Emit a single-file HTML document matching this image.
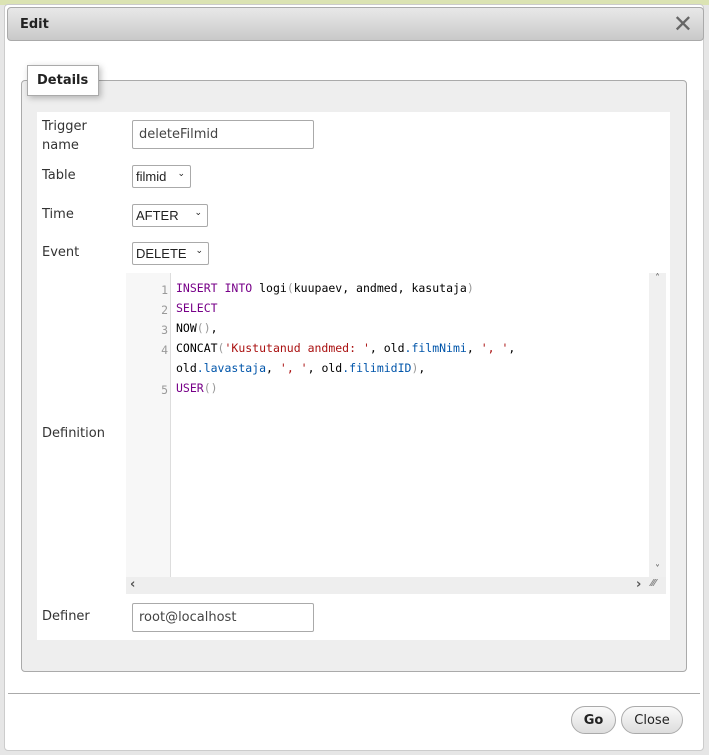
<!DOCTYPE html>
<html><head><style>
*{box-sizing:border-box}
body{margin:0;width:709px;height:755px;background:#e6e6e6;position:relative;overflow:hidden;font-family:"DejaVu Sans","Liberation Sans",sans-serif;font-size:13px;color:#333}
.abs{position:absolute}
.dlg{left:4px;top:4px;width:700px;height:747px;background:#fff;border:1px solid #ccc;border-radius:4px}
.title{left:7px;top:7px;width:697px;height:34px;border:1px solid #aaa;border-radius:4px;background:linear-gradient(#e8e8e8,#c9c9c9);font-weight:bold;font-size:13px;color:#222;padding:9px 0 0 12px}
.fs{left:21px;top:80px;width:666px;height:592px;background:#eee;border:1px solid #aaa;border-radius:4px}
.legend{left:27px;top:65px;width:72px;height:31px;background:#fff;border:1px solid #aaa;box-shadow:2px 2px 6px rgba(0,0,0,.25);font-weight:bold;color:#222;padding:7px 0 0 9px;font-size:13px}
.inner{left:37px;top:112px;width:633px;height:528px;background:#fff}
.lbl{left:42px;color:#333}
.inp{border:1px solid #aaa;border-radius:2px;background:#fff;padding:6px 0 0 6px;color:#444}
.sel{border:1px solid #aaa;border-radius:2px;background:#fff;padding:3px 0 0 3px;color:#222;font-family:"Liberation Sans",sans-serif;font-size:13px}
.sel span{position:absolute;right:5px;top:2px;font-size:9px}
.ed{left:126px;top:273px;width:540px;height:321px;background:#fff}
.gut{left:0;top:0;width:45px;height:304px;background:#f7f7f7;border-right:1px solid #ddd}
.code{font-family:"DejaVu Sans Mono","Liberation Mono",monospace;font-size:11.5px;line-height:20px;white-space:pre;color:#000}
.num{color:#999;text-align:right;width:42px;left:0;top:7px}
.k{color:#708}.s{color:#a11}.p{color:#05a}.b{color:#999}
.btn{top:706px;height:28px;border:1px solid #aaa;border-radius:14px;background:linear-gradient(#fafafa,#ddd);text-align:center;padding-top:6px;color:#222;font-size:13px}
</style></head><body>
<div class="abs" style="left:0;top:0;width:709px;height:5px;background:#dbe3b3"></div>
<div class="abs" style="left:703px;top:90px;width:6px;height:30px;background:#ddd"></div>
<div class="abs dlg"></div>
<div class="abs title">Edit<span class="abs" style="right:10px;top:2px;font-weight:normal;font-size:24px;color:#666">✕</span></div>
<div class="abs fs"></div>
<div class="abs inner"></div>
<div class="abs legend">Details</div>
<div class="abs lbl" style="top:117px;line-height:19px">Trigger<br>name</div>
<div class="abs inp" style="left:132px;top:120px;width:182px;height:29px">deleteFilmid</div>
<div class="abs lbl" style="top:168px">Table</div>
<div class="abs sel" style="left:132px;top:165px;width:59px;height:23px">filmid<span>⌄</span></div>
<div class="abs lbl" style="top:207px">Time</div>
<div class="abs sel" style="left:132px;top:204px;width:76px;height:23px">AFTER<span>⌄</span></div>
<div class="abs lbl" style="top:245px">Event</div>
<div class="abs sel" style="left:132px;top:242px;width:77px;height:23px">DELETE<span>⌄</span></div>
<div class="abs lbl" style="top:426px">Definition</div>
<div class="abs ed">
<div class="abs gut"></div>
<div class="abs code num">1
2
3
4

5</div>
<div class="abs code" style="left:50px;top:5px"><span class="k">INSERT</span> <span class="k">INTO</span> logi<span class="b">(</span>kuupaev, andmed, kasutaja<span class="b">)</span>
<span class="k">SELECT</span>
NOW<span class="b">()</span>,
CONCAT<span class="b">(</span><span class="s">'Kustutanud andmed: '</span>, old<span class="p">.filmNimi</span>, <span class="s">', '</span>,
old<span class="p">.lavastaja</span>, <span class="s">', '</span>, old<span class="p">.filimidID</span><span class="b">)</span>,
<span class="k">USER</span><span class="b">()</span></div>
<div class="abs" style="left:523px;top:0;width:17px;height:304px;background:#f0f0f0;font-size:10px;text-align:center;color:#555">˄<div style="position:absolute;bottom:2px;width:17px">˅</div></div>
<div class="abs" style="left:0;top:304px;width:540px;height:17px;background:#eee;font-size:13px;color:#555;font-weight:bold"><span style="position:absolute;left:4px;top:0">‹</span><span style="position:absolute;left:510px;top:0">›</span><span style="position:absolute;left:525px;top:1px;font-size:10px;color:#888">⁄⁄⁄</span></div>
</div>
<div class="abs lbl" style="top:609px">Definer</div>
<div class="abs inp" style="left:132px;top:603px;width:182px;height:29px">root@localhost</div>
<div class="abs" style="left:8px;top:693px;width:692px;height:1px;background:#aaa"></div>
<div class="abs btn" style="left:571px;width:45px;font-weight:bold">Go</div>
<div class="abs btn" style="left:621px;width:62px">Close</div>
</body></html>
